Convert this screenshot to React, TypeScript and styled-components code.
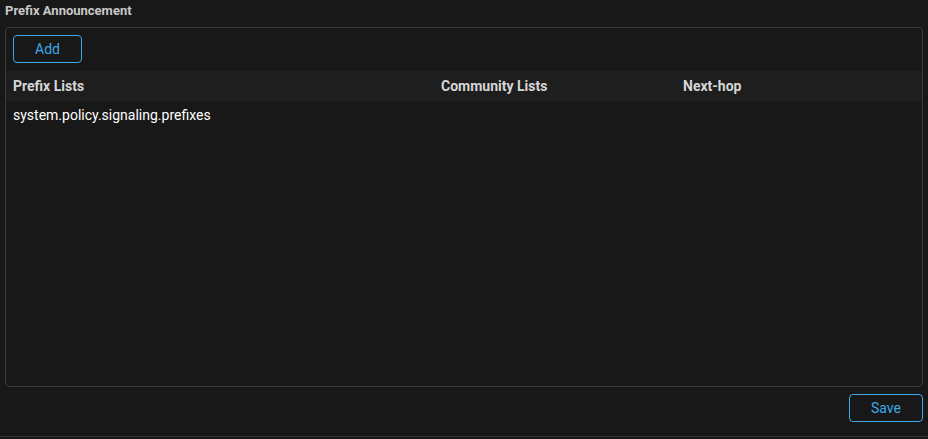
import React from 'react';
import styled, { createGlobalStyle } from 'styled-components';

const colors = {
    background: '#181818',
    headerRow: '#1e1e1e',
    border: '#3a3a3a',
    accent: '#3fa9e6',
    title: '#c8c8c8',
    heading: '#d6d6d6',
    text: '#ffffff',
};

const GlobalStyle = createGlobalStyle`
    html, body {
        margin: 0;
        padding: 0;
        background: ${colors.background};
        font-family: Roboto, "Liberation Sans", sans-serif;
    }
`;

const Page = styled.div`
    width: 928px;
    height: 437px;
    box-sizing: border-box;
    border-bottom: 1px solid #343434;
    padding: 0 5px;
    display: flex;
    flex-direction: column;
`;

const SectionTitle = styled.div`
    height: 27px;
    box-sizing: border-box;
    padding-top: 3px;
    font-size: 13px;
    font-weight: 700;
    color: ${colors.title};
`;

const Panel = styled.div`
    height: 360px;
    box-sizing: border-box;
    border: 1px solid ${colors.border};
    border-radius: 4px;
    display: flex;
    flex-direction: column;
`;

const Toolbar = styled.div`
    padding: 7px 7px 8px;
    display: flex;
`;

const OutlineButton = styled.button<{ $width: number }>`
    width: ${p => p.$width}px;
    height: 28px;
    box-sizing: border-box;
    background: transparent;
    border: 1px solid ${colors.accent};
    border-radius: 4px;
    color: ${colors.accent};
    font-family: Roboto, "Liberation Sans", sans-serif;
    font-size: 14px;
    padding: 0;
    cursor: pointer;
`;

const Row = styled.div<{ $header?: boolean }>`
    display: grid;
    grid-template-columns: 428px 242px 1fr;
    align-items: center;
    height: ${p => (p.$header ? 30 : 28)}px;
    padding: 0 7px;
    background: ${p => (p.$header ? colors.headerRow : 'transparent')};
    font-size: 14px;
    font-weight: ${p => (p.$header ? 700 : 400)};
    color: ${p => (p.$header ? colors.heading : colors.text)};
`;

const Cell = styled.div`
    white-space: nowrap;
    overflow: hidden;
`;

const Footer = styled.div`
    display: flex;
    justify-content: flex-end;
    padding-top: 7px;
`;

const rows = [
    { prefix: 'system.policy.signaling.prefixes', community: '', nextHop: '' },
];

const App = () => {
    return (
        <>
            <GlobalStyle />
            <Page>
                <SectionTitle>Prefix Announcement</SectionTitle>
                <Panel>
                    <Toolbar>
                        <OutlineButton $width={69}>Add</OutlineButton>
                    </Toolbar>
                    <Row $header>
                        <Cell>Prefix Lists</Cell>
                        <Cell>Community Lists</Cell>
                        <Cell>Next-hop</Cell>
                    </Row>
                    {rows.map(r => (
                        <Row key={r.prefix}>
                            <Cell>{r.prefix}</Cell>
                            <Cell>{r.community}</Cell>
                            <Cell>{r.nextHop}</Cell>
                        </Row>
                    ))}
                </Panel>
                <Footer>
                    <OutlineButton $width={74}>Save</OutlineButton>
                </Footer>
            </Page>
        </>
    );
};

export default App;
